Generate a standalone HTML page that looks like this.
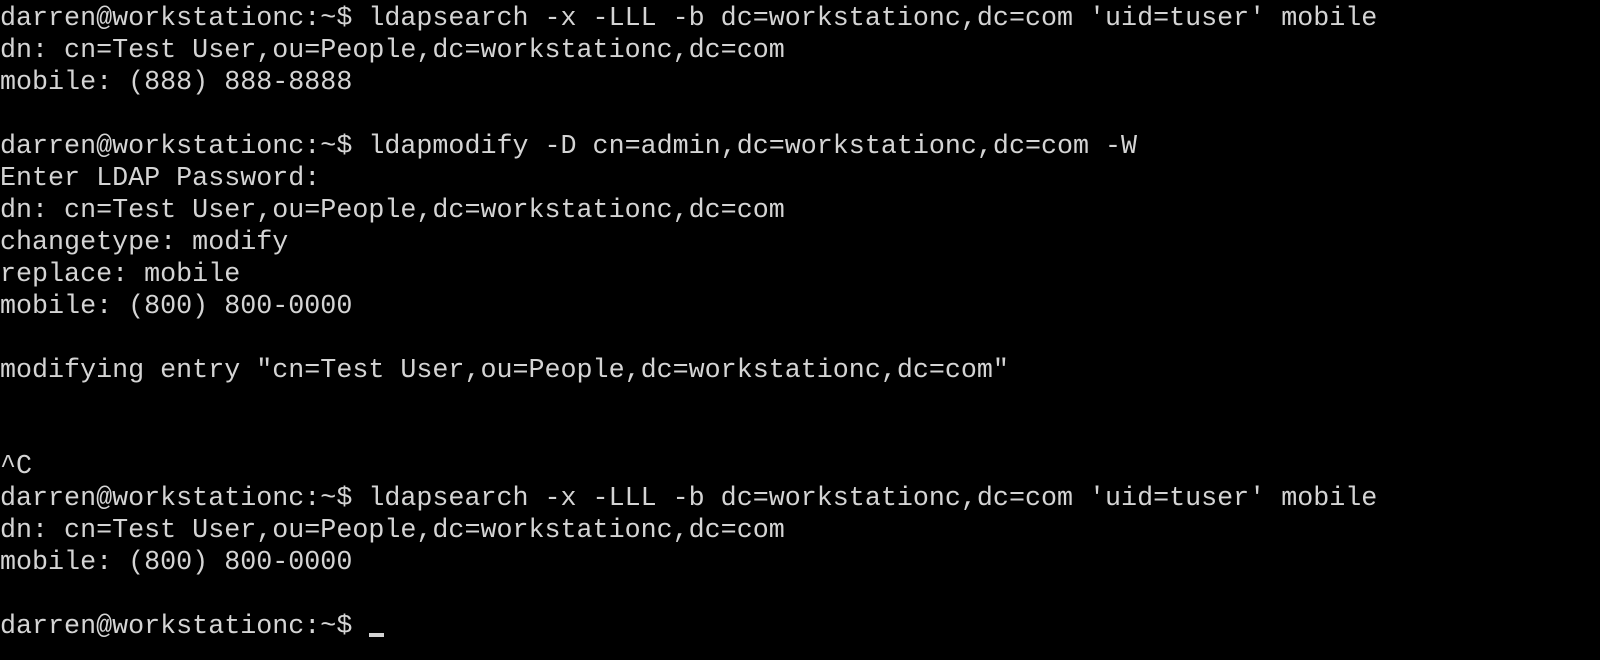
<!DOCTYPE html>
<html><head><style>
html,body{margin:0;background:#000;width:1600px;height:660px;overflow:hidden}
pre{margin:0;position:absolute;left:0;top:3px;font-family:"Liberation Mono",monospace;font-size:26.7px;line-height:32px;color:#d4d4d4;letter-spacing:0}
.cur{position:absolute;left:369px;top:633px;width:15px;height:4px;background:#d4d4d4}
</style></head><body>
<pre>darren@workstationc:~$ ldapsearch -x -LLL -b dc=workstationc,dc=com 'uid=tuser' mobile
dn: cn=Test User,ou=People,dc=workstationc,dc=com
mobile: (888) 888-8888

darren@workstationc:~$ ldapmodify -D cn=admin,dc=workstationc,dc=com -W
Enter LDAP Password:
dn: cn=Test User,ou=People,dc=workstationc,dc=com
changetype: modify
replace: mobile
mobile: (800) 800-0000

modifying entry "cn=Test User,ou=People,dc=workstationc,dc=com"


^C
darren@workstationc:~$ ldapsearch -x -LLL -b dc=workstationc,dc=com 'uid=tuser' mobile
dn: cn=Test User,ou=People,dc=workstationc,dc=com
mobile: (800) 800-0000

darren@workstationc:~$ </pre>
<div class="cur"></div>
</body></html>
